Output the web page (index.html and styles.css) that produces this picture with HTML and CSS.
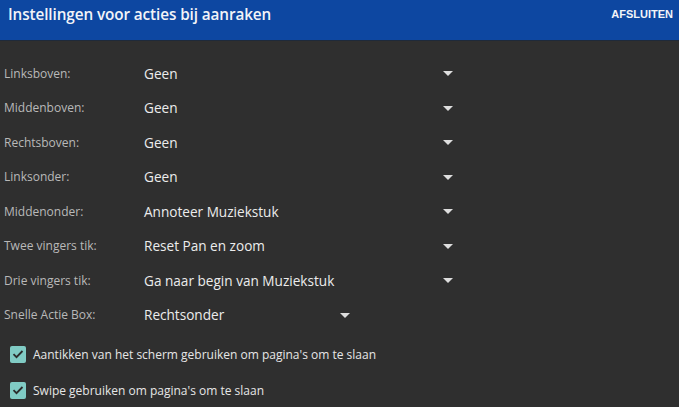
FILE: index.html
```html
<!DOCTYPE html>
<html lang="nl">
<head>
<meta charset="utf-8">
<title>Instellingen voor acties bij aanraken</title>
<link rel="stylesheet" href="styles.css">
</head>
<body>
<header class="bar">
  <h1 class="title">Instellingen voor acties bij aanraken</h1>
  <button class="close">AFSLUITEN</button>
</header>
<main class="content">
  <div class="row"><span class="label">Linksboven:</span><div class="select"><span class="value">Geen</span><span class="caret"></span></div></div>
  <div class="row"><span class="label">Middenboven:</span><div class="select"><span class="value">Geen</span><span class="caret"></span></div></div>
  <div class="row"><span class="label">Rechtsboven:</span><div class="select"><span class="value">Geen</span><span class="caret"></span></div></div>
  <div class="row"><span class="label">Linksonder:</span><div class="select"><span class="value">Geen</span><span class="caret"></span></div></div>
  <div class="row"><span class="label">Middenonder:</span><div class="select"><span class="value">Annoteer Muziekstuk</span><span class="caret"></span></div></div>
  <div class="row"><span class="label">Twee vingers tik:</span><div class="select"><span class="value">Reset Pan en zoom</span><span class="caret"></span></div></div>
  <div class="row"><span class="label">Drie vingers tik:</span><div class="select"><span class="value">Ga naar begin van Muziekstuk</span><span class="caret"></span></div></div>
  <div class="row"><span class="label">Snelle Actie Box:</span><div class="select select-short"><span class="value">Rechtsonder</span><span class="caret"></span></div></div>
  <div class="checks">
    <label class="check"><span class="box"><svg viewBox="0 0 16 16" width="16" height="16"><path d="M3.5 8.2 L6.5 11.2 L12.5 5" fill="none" stroke="#2b2b2b" stroke-width="1.8"/></svg></span><span class="check-text">Aantikken van het scherm gebruiken om pagina's om te slaan</span></label>
    <label class="check"><span class="box"><svg viewBox="0 0 16 16" width="16" height="16"><path d="M3.5 8.2 L6.5 11.2 L12.5 5" fill="none" stroke="#2b2b2b" stroke-width="1.8"/></svg></span><span class="check-text">Swipe gebruiken om pagina's om te slaan</span></label>
  </div>
</main>
</body>
</html>
```
FILE: styles.css
```css
* { box-sizing: border-box; }
html, body { margin: 0; padding: 0; }
body {
  background: #2f2f2f;
  font-family: "Open Sans", Roboto, "Liberation Sans", sans-serif;
  width: 679px;
  height: 407px;
  overflow: hidden;
}
.bar {
  height: 41px;
  background: #0d47a1;
  border-bottom: 1px solid #1f2a3a;
  display: flex;
  justify-content: space-between;
  align-items: flex-start;
  padding: 0 6px 0 8px;
}
.title {
  margin: 4px 0 0;
  font-size: 15.3px;
  font-weight: 600;
  color: #f2f4f8;
  letter-spacing: -0.1px;
}
.close {
  margin-top: 8px;
  background: none;
  border: 0;
  padding: 0;
  color: #f2f4f8;
  font-family: "Liberation Sans", Arial, sans-serif;
  font-weight: 700;
  font-size: 11px;
}
.content {
  padding: 15px 0 0 4px;
}
.row {
  height: 34.5px;
  display: flex;
  align-items: center;
}
.label {
  width: 140px;
  font-size: 12px;
  color: #b9b9b9;
}
.select {
  width: 309px;
  display: flex;
  justify-content: space-between;
  align-items: center;
}
.select-short { width: 206px; }
.value {
  font-size: 13.6px;
  color: #ececec;
}
.caret {
  width: 0;
  height: 0;
  border-left: 5px solid transparent;
  border-right: 5px solid transparent;
  border-top: 5px solid #dedede;
  margin-top: 1px;
}
.checks {
  display: flex;
  flex-direction: column;
  gap: 18px;
  padding: 13px 0 0 6px;
}
.check {
  display: flex;
  align-items: center;
  gap: 7px;
  height: 18px;
}
.box {
  width: 16px;
  height: 17px;
  background: #80cbc4;
  border-radius: 2px;
  display: flex;
  align-items: center;
  justify-content: center;
}
.check-text {
  font-size: 12px;
  color: #e6e6e6;
}
```
